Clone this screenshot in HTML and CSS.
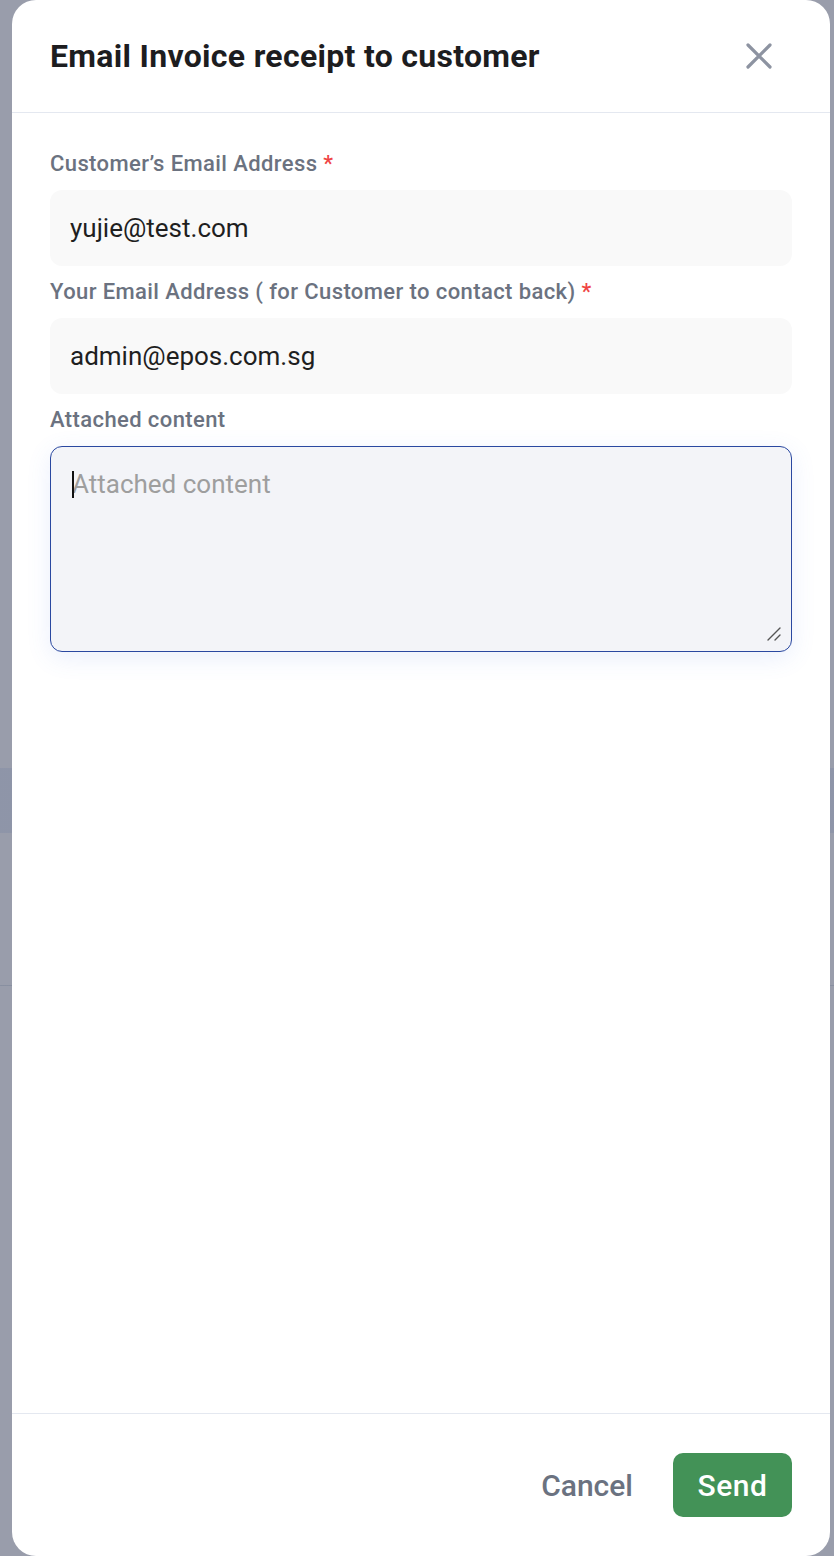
FILE: index.html
```html
<!DOCTYPE html>
<html>
  <head>
    <title>Email Invoice receipt</title>
    <link rel="stylesheet" href="styles.css">
  </head>
  <body>
    <div class="backdrop">
      <div class="modal">
        <div class="modal-header">
          <h2 class="modal-title">Email Invoice receipt to customer</h2>
          <button class="close-btn" aria-label="Close">
            <svg width="28" height="28" viewBox="0 0 28 28">
              <path d="M3 3 L25 25 M25 3 L3 25" stroke="currentColor" stroke-width="3.2" stroke-linecap="round" fill="none"/>
            </svg>
          </button>
        </div>

        <div class="modal-body">
          <div class="field">
            <label class="field-label">Customer’s Email Address <span class="req">*</span></label>
            <input class="field-input" type="text" value="yujie@test.com">
          </div>
          <div class="field">
            <label class="field-label">Your Email Address ( for Customer to contact back) <span class="req">*</span></label>
            <input class="field-input" type="text" value="admin@epos.com.sg">
          </div>
          <div class="field">
            <label class="field-label">Attached content</label>
            <div class="textarea-wrap">
              <textarea class="field-textarea" placeholder="Attached content"></textarea>
              <span class="caret"></span>
              <svg class="grip" width="16" height="16" viewBox="0 0 16 16">
                <path d="M2 14 L14 2 M9 14 L14 9" stroke="#555" stroke-width="1.4" stroke-linecap="round" fill="none"/>
              </svg>
            </div>
          </div>
        </div>

        <div class="modal-footer">
          <button class="btn btn-cancel">Cancel</button>
          <button class="btn btn-send">Send</button>
        </div>
      </div>
    </div>
  </body>
</html>
```

FILE: styles.css
```css
html, body {
  margin: 0;
  padding: 0;
}

body {
  font-family: Roboto, "Liberation Sans", Arial, sans-serif;
  background: #999dab;
}

.backdrop {
  height: 1556px;
  background:
    linear-gradient(to bottom,
      transparent 768px, rgba(110, 125, 160, 0.25) 768px,
      rgba(110, 125, 160, 0.25) 833px, transparent 833px,
      transparent 985px, rgba(120, 130, 150, 0.5) 985px,
      rgba(120, 130, 150, 0.5) 986px, transparent 986px);
  overflow: hidden;
}

.modal {
  width: 818px;
  height: 1556px;
  margin-left: 12px;
  background: #fff;
  border-radius: 24px;
  display: flex;
  flex-direction: column;
  box-sizing: border-box;
}

.modal-header {
  height: 112px;
  display: flex;
  align-items: center;
  justify-content: space-between;
  padding: 0 57px 0 38px;
  border-bottom: 1px solid #e4e8f0;
  flex-shrink: 0;
}

.modal-title {
  margin: 0;
  font-size: 32px;
  font-weight: 700;
  color: #1d1d1f;
  letter-spacing: 0.3px;
}

.close-btn {
  border: none;
  background: none;
  padding: 0;
  color: #8d93a1;
  display: flex;
  cursor: pointer;
}

.modal-body {
  flex: 1;
  padding: 37px 38px 0 38px;
  display: flex;
  flex-direction: column;
  gap: 12px;
}

.field {
  display: flex;
  flex-direction: column;
  gap: 12px;
}

.field-label {
  font-size: 22px;
  line-height: 28px;
  font-weight: 500;
  color: #6b7280;
  letter-spacing: 0.4px;
}

.req {
  color: #ef4444;
}

.field-input {
  height: 76px;
  box-sizing: border-box;
  border: none;
  border-radius: 12px;
  background: #f9f9f9;
  padding: 0 20px;
  font-family: inherit;
  font-size: 26px;
  color: #1f1f1f;
  outline: none;
}

.textarea-wrap {
  position: relative;
  display: flex;
}

.field-textarea {
  flex: 1;
  height: 206px;
  box-sizing: border-box;
  border: 1px solid #2a48a0;
  border-radius: 12px;
  background: #f3f4f8;
  padding: 19px 21px;
  font-family: inherit;
  font-size: 26px;
  line-height: 36px;
  color: #1f1f1f;
  outline: none;
  box-shadow: 0 6px 24px rgba(80, 120, 230, 0.12);
  resize: none;
}

.field-textarea::placeholder {
  color: #9e9e9e;
}

.caret {
  position: absolute;
  left: 22px;
  top: 25px;
  width: 2px;
  height: 27px;
  background: #111;
}

.grip {
  position: absolute;
  right: 10px;
  bottom: 10px;
}

.modal-footer {
  height: 143px;
  flex-shrink: 0;
  border-top: 1px solid #e4e8f0;
  display: flex;
  align-items: center;
  justify-content: flex-end;
  gap: 40px;
  padding: 0 38px 0 0;
  box-sizing: border-box;
}

.btn {
  font-family: inherit;
  font-size: 30px;
  font-weight: 500;
  border: none;
  cursor: pointer;
}

.btn-cancel {
  background: none;
  color: #6b7280;
  padding: 0;
}

.btn-send {
  background: #439257;
  color: #fff;
  height: 64px;
  width: 119px;
  border-radius: 10px;
  letter-spacing: 0.5px;
}
```
